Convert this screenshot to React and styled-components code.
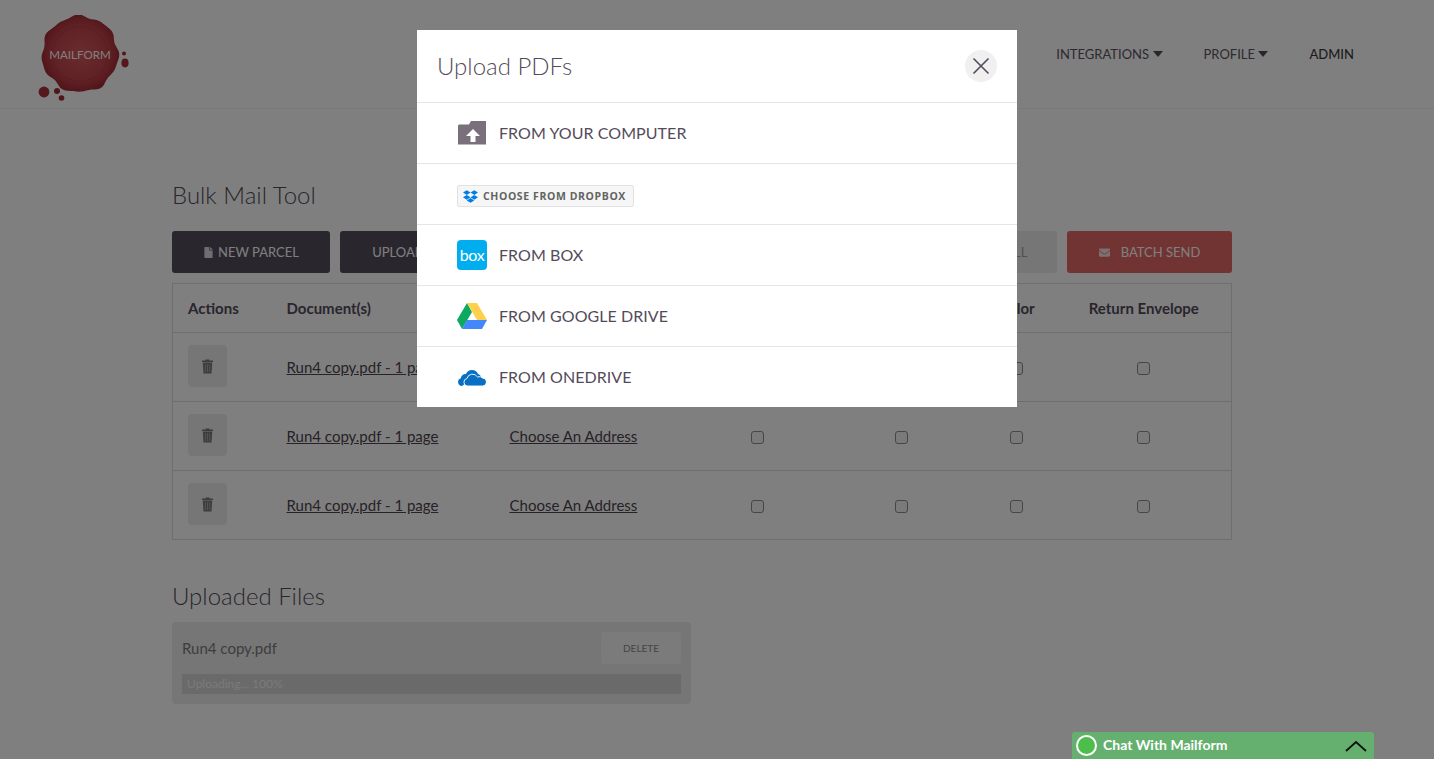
import React from 'react'
import styled, { createGlobalStyle } from 'styled-components'
import { FaDropbox, FaEnvelope, FaFile } from 'react-icons/fa'

const GlobalStyle = createGlobalStyle`
  html, body {
    margin: 0;
    height: 100%;
    overflow: hidden;
    background: #fff;
    font-family: Lato, "Liberation Sans", sans-serif;
    color: #544b5a;
  }
  * { box-sizing: border-box; }
`;

const Header = styled.header`
  display: flex;
  align-items: center;
  justify-content: space-between;
  height: 109px;
  padding: 0 80px 0 38px;
  border-bottom: 1px solid #f2f2f2;
`;

const Logo = styled.svg`
  display: block;
  width: 92px;
  height: 87px;
  margin-top: 9px;
`;

const Nav = styled.nav`
  display: flex;
  gap: 41px;
  margin-bottom: 1px;
`;

const NavItem = styled.a`
  display: flex;
  align-items: center;
  gap: 3.5px;
  font-size: 13px;
  line-height: 16px;
  color: ${p => (p.$strong ? '#3f3844' : '#5b5361')};
  font-weight: ${p => (p.$strong ? 500 : 400)};
`;

const Caret = styled.i`
  width: 0;
  height: 0;
  border-left: 5px solid transparent;
  border-right: 5px solid transparent;
  border-top: 6px solid #544b5a;
`;

const Main = styled.main`
  width: 1060px;
  margin-left: 172px;
  padding-top: 70px;
`;

const Title = styled.h1`
  margin: 0 0 20px;
  font-size: 24px;
  line-height: 32px;
  font-weight: 300;
  color: #544b5a;
`;

const Toolbar = styled.div`
  display: flex;
  gap: 10px;
  margin-bottom: 10px;
`;

const ToolButton = styled.button`
  display: flex;
  align-items: center;
  justify-content: center;
  gap: ${p => (p.$wide ? '11px' : '4px')};
  flex: ${p => (p.$grow ? '1' : 'none')};
  width: ${p => p.$width || 'auto'};
  height: 42px;
  padding: 0;
  border: 0;
  border-radius: 3px;
  background: ${p => p.$bg};
  color: ${p => p.$fg || '#fff'};
  font-family: inherit;
  font-size: 13px;
  svg { font-size: 11px; opacity: 0.8; }
`;

const Table = styled.table`
  width: 1059.5px;
  table-layout: fixed;
  border-collapse: collapse;
  border: 1px solid #dcdcdc;
`;

const Head = styled.th`
  height: 49px;
  padding: 0 15px;
  border-bottom: 1px solid #dcdcdc;
  font-size: 15px;
  font-weight: 700;
  color: #544b5a;
  text-align: ${p => (p.$center ? 'center' : 'left')};
`;

const Cell = styled.td`
  height: 69px;
  padding: 0 15px;
  border-bottom: 1px solid #dcdcdc;
  font-size: 15px;
  text-align: ${p => (p.$center ? 'center' : 'left')};
`;

const TrashButton = styled.button`
  display: flex;
  align-items: center;
  justify-content: center;
  width: 39px;
  height: 42px;
  margin-bottom: 2px;
  padding: 0;
  border: 0;
  border-radius: 4px;
  background: #ececec;
`;

const TextLink = styled.a`
  color: #4f4350;
  text-decoration: underline;
  white-space: nowrap;
`;

const CheckBox = styled.input.attrs({ type: 'checkbox' })`
  appearance: none;
  display: block;
  width: 13px;
  height: 13px;
  margin: 3px auto 0;
  border: 1px solid #8c8c8c;
  border-radius: 3px;
  background: #f4f4f4;
`;

const SubTitle = styled.h2`
  margin: 40px 0 10px;
  font-size: 24px;
  line-height: 32px;
  font-weight: 300;
  color: #544b5a;
`;

const FileCard = styled.div`
  width: 519px;
  height: 82px;
  padding: 10px;
  border-radius: 4px;
  background: #ececec;
`;

const FileRow = styled.div`
  display: flex;
  align-items: center;
  justify-content: space-between;
  margin-bottom: 10px;
  font-size: 15px;
  color: #7d7a80;
`;

const DeleteButton = styled.button`
  width: 80px;
  height: 32px;
  padding: 0;
  border: 0;
  border-radius: 3px;
  background: #f7f7f7;
  color: #8a8a8a;
  font-family: inherit;
  font-size: 10px;
`;

const Progress = styled.div`
  height: 20px;
  padding-left: 5px;
  background: #d4d4d4;
  color: #f4f4f4;
  font-size: 12px;
  line-height: 20px;
`;

const Overlay = styled.div`
  position: fixed;
  inset: 0;
  display: flex;
  justify-content: center;
  align-items: flex-start;
  padding-top: 30px;
  background: rgba(0, 0, 0, 0.5);
`;

const Modal = styled.div`
  width: 600px;
  background: #fff;
`;

const ModalHeader = styled.div`
  display: flex;
  align-items: center;
  justify-content: space-between;
  height: 73px;
  padding: 0 20px;
  border-bottom: 1px solid #e6e6e6;
`;

const ModalTitle = styled.h3`
  margin: 0 0 2px;
  font-size: 24px;
  font-weight: 300;
  color: #544b5a;
`;

const CloseButton = styled.button`
  display: flex;
  align-items: center;
  justify-content: center;
  width: 32px;
  height: 32px;
  padding: 0;
  border: 0;
  border-radius: 50%;
  background: #f0f0f0;
`;

const SourceRow = styled.div`
  display: flex;
  align-items: center;
  gap: 12px;
  height: 61px;
  padding-left: 40px;
  border-bottom: 1px solid #e6e6e6;
  &:last-child {
    height: 60px;
    border-bottom: 0;
  }
`;

const SourceLabel = styled.span`
  margin-bottom: 2px;
  font-size: 16px;
  letter-spacing: 0.06px;
  color: #544b5a;
`;

const IconSlot = styled.span`
  display: flex;
  align-items: center;
  justify-content: center;
  width: 30px;
  height: 30px;
`;

const BoxBadge = styled.span`
  display: flex;
  align-items: center;
  justify-content: center;
  width: 30px;
  height: 30px;
  padding-bottom: 2px;
  border-radius: 4px;
  background: #00aeef;
  color: #fff;
  font-size: 16px;
  letter-spacing: -0.4px;
`;

const DropboxButton = styled.button`
  display: flex;
  align-items: center;
  gap: 5px;
  width: 177px;
  height: 22px;
  margin-top: 4px;
  padding: 0 0 0 5px;
  border: 1px solid #e2e2e2;
  border-radius: 2px;
  background: #f6f6f6;
  color: #636363;
  font-family: "Open Sans", sans-serif;
  font-size: 10.5px;
  font-weight: 700;
  letter-spacing: 0.6px;
  svg { color: #007ee5; font-size: 15px; }
`;

const ChatBar = styled.div`
  position: fixed;
  right: 60px;
  bottom: 0;
  display: flex;
  align-items: center;
  width: 302px;
  height: 27px;
  padding: 0 7px 0 4px;
  border-radius: 3px 3px 0 0;
  background: #65b06f;
  color: #fff;
  font-size: 14px;
  font-weight: 700;
`;

const ChatDot = styled.i`
  width: 21px;
  height: 21px;
  margin-right: 6px;
  border: 2px solid #fff;
  border-radius: 50%;
  background: #4cbe4c;
`;

const ChatText = styled.span`
  margin-bottom: 3px;
`;

const Chevron = styled.svg`
  margin-left: auto;
  width: 22px;
  height: 14px;
`;

const rows = [1, 2, 3]

// wobbly outline of the wax seal
const sealPath = Array.from({ length: 90 }, (_, i) => {
  const a = (i / 90) * Math.PI * 2
  const r = 38 + 1.1 * Math.sin(7 * a + 0.6) + 0.7 * Math.sin(12 * a + 2)
  return `${(42 + r * Math.cos(a)).toFixed(1)} ${(39 + r * Math.sin(a)).toFixed(1)}`
}).join('L')

const TrashIcon = () => (
  <svg width="11" height="15" viewBox="0 0 11 15">
    <path d="M3.5 1.5V.5h4v1h3.5v1.5H0V1.5z" fill="#7a7a7a" />
    <path d="M.8 3.6h9.4l-.7 11H1.5z" fill="#7a7a7a" />
    <path d="M3.3 5.2v7.8M5.5 5.2v7.8M7.7 5.2v7.8" stroke="#b4b4b4" strokeWidth="0.8" />
  </svg>
)

const App = () => (
  <>
    <GlobalStyle />
    <Header>
      <Logo viewBox="0 0 92 87">
        <defs>
          <radialGradient id="wax">
            <stop offset="0" stopColor="#d5585e" />
            <stop offset="0.7" stopColor="#c2444b" />
            <stop offset="1" stopColor="#a42c34" />
          </radialGradient>
        </defs>
        <path d={`M${sealPath}Z`} fill="url(#wax)" />
        <circle cx="42" cy="39" r="27.5" fill="none" stroke="#a83840" strokeWidth="0.7" />
        <text x="42" y="43.7" textAnchor="middle" fontFamily="Lato, sans-serif" fontSize="11.6" fill="#fff">MAILFORM</text>
        <circle cx="6" cy="77" r="5.4" fill="#ab3038" />
        <circle cx="19" cy="76" r="3" fill="#a42c34" />
        <circle cx="23.5" cy="83" r="2.8" fill="#a42c34" />
        <circle cx="86" cy="38.5" r="2" fill="#a42c34" />
        <ellipse cx="87" cy="48" rx="3.6" ry="4.4" fill="#ab3038" />
      </Logo>
      <Nav>
        <NavItem>INTEGRATIONS <Caret /></NavItem>
        <NavItem>PROFILE <Caret /></NavItem>
        <NavItem $strong>ADMIN</NavItem>
      </Nav>
    </Header>

    <Main>
      <Title>Bulk Mail Tool</Title>
      <Toolbar>
        <ToolButton $width="158px" $bg="#544c5c"><FaFile /> NEW PARCEL</ToolButton>
        <ToolButton $width="152px" $bg="#544c5c">UPLOAD PDFS</ToolButton>
        <ToolButton $grow $bg="#544c5c">SAVE</ToolButton>
        <ToolButton $width="124px" $bg="#ececec" $fg="#a0a0a0">CLEAR ALL</ToolButton>
        <ToolButton $wide $width="165px" $bg="#e46666"><FaEnvelope /> BATCH SEND</ToolButton>
      </Toolbar>

      <Table>
        <colgroup>
          <col width="99" />
          <col width="223" />
          <col width="195" />
          <col width="136" />
          <col width="151" />
          <col width="80" />
          <col width="175" />
        </colgroup>
        <thead>
          <tr>
            <Head>Actions</Head>
            <Head>Document(s)</Head>
            <Head>Address</Head>
            <Head $center>Certified</Head>
            <Head $center>Duplex</Head>
            <Head $center>Color</Head>
            <Head $center>Return Envelope</Head>
          </tr>
        </thead>
        <tbody>
          {rows.map(row => (
            <tr key={row}>
              <Cell><TrashButton><TrashIcon /></TrashButton></Cell>
              <Cell><TextLink>Run4 copy.pdf - 1 page</TextLink></Cell>
              <Cell><TextLink>Choose An Address</TextLink></Cell>
              <Cell $center><CheckBox /></Cell>
              <Cell $center><CheckBox /></Cell>
              <Cell $center><CheckBox /></Cell>
              <Cell $center><CheckBox /></Cell>
            </tr>
          ))}
        </tbody>
      </Table>

      <SubTitle>Uploaded Files</SubTitle>
      <FileCard>
        <FileRow>
          Run4 copy.pdf
          <DeleteButton>DELETE</DeleteButton>
        </FileRow>
        <Progress>Uploading... 100%</Progress>
      </FileCard>
    </Main>

    <Overlay>
      <Modal>
        <ModalHeader>
          <ModalTitle>Upload PDFs</ModalTitle>
          <CloseButton>
            <svg width="18" height="18" viewBox="0 0 18 18">
              <path d="M1.5 1.5l15 15M16.5 1.5l-15 15" stroke="#544b5a" strokeWidth="1.6" />
            </svg>
          </CloseButton>
        </ModalHeader>
        <SourceRow>
          <IconSlot>
            <svg width="28" height="24" viewBox="0 0 28 24">
              <path d="M1 3.5h10l2-3.5h15v23.5H0V4.5z" fill="#7a707c" />
              <path d="M15 8l7 7h-4.5v6h-5v-6H8z" fill="#fff" />
            </svg>
          </IconSlot>
          <SourceLabel>FROM YOUR COMPUTER</SourceLabel>
        </SourceRow>
        <SourceRow>
          <DropboxButton><FaDropbox /> CHOOSE FROM DROPBOX</DropboxButton>
        </SourceRow>
        <SourceRow>
          <BoxBadge>box</BoxBadge>
          <SourceLabel>FROM BOX</SourceLabel>
        </SourceRow>
        <SourceRow>
          <IconSlot>
            <svg width="30" height="26" viewBox="0 0 30 26">
              <path d="M10 0L0 17l5 9 10-17z" fill="#0da960" />
              <path d="M10 0h10l10 17H20z" fill="#ffd04b" />
              <path d="M5 26h20l5-9H10z" fill="#4387fd" />
            </svg>
          </IconSlot>
          <SourceLabel>FROM GOOGLE DRIVE</SourceLabel>
        </SourceRow>
        <SourceRow>
          <IconSlot>
            <svg width="28" height="17" viewBox="0 0 28 17">
              <path d="M4 17a4 4 0 0 1-1.2-7.8A4.8 4.8 0 0 1 8 5 6.5 6.5 0 0 1 20 5a5 5 0 0 1 3 6H12z" fill="#0a6fc2" />
              <path d="M9.5 17a3.8 3.8 0 0 1-.6-7.5A5.8 5.8 0 0 1 19.5 8a4.4 4.4 0 0 1 5 1 4 4 0 0 1 0 8z" fill="#0a6fc2" stroke="#fff" strokeWidth="0.9" />
            </svg>
          </IconSlot>
          <SourceLabel>FROM ONEDRIVE</SourceLabel>
        </SourceRow>
      </Modal>
    </Overlay>

    <ChatBar>
      <ChatDot />
      <ChatText>Chat With Mailform</ChatText>
      <Chevron viewBox="0 0 22 14">
        <path d="M1 12l10-9 10 9" fill="none" stroke="#111" strokeWidth="1.8" />
      </Chevron>
    </ChatBar>
  </>
)

export default App
